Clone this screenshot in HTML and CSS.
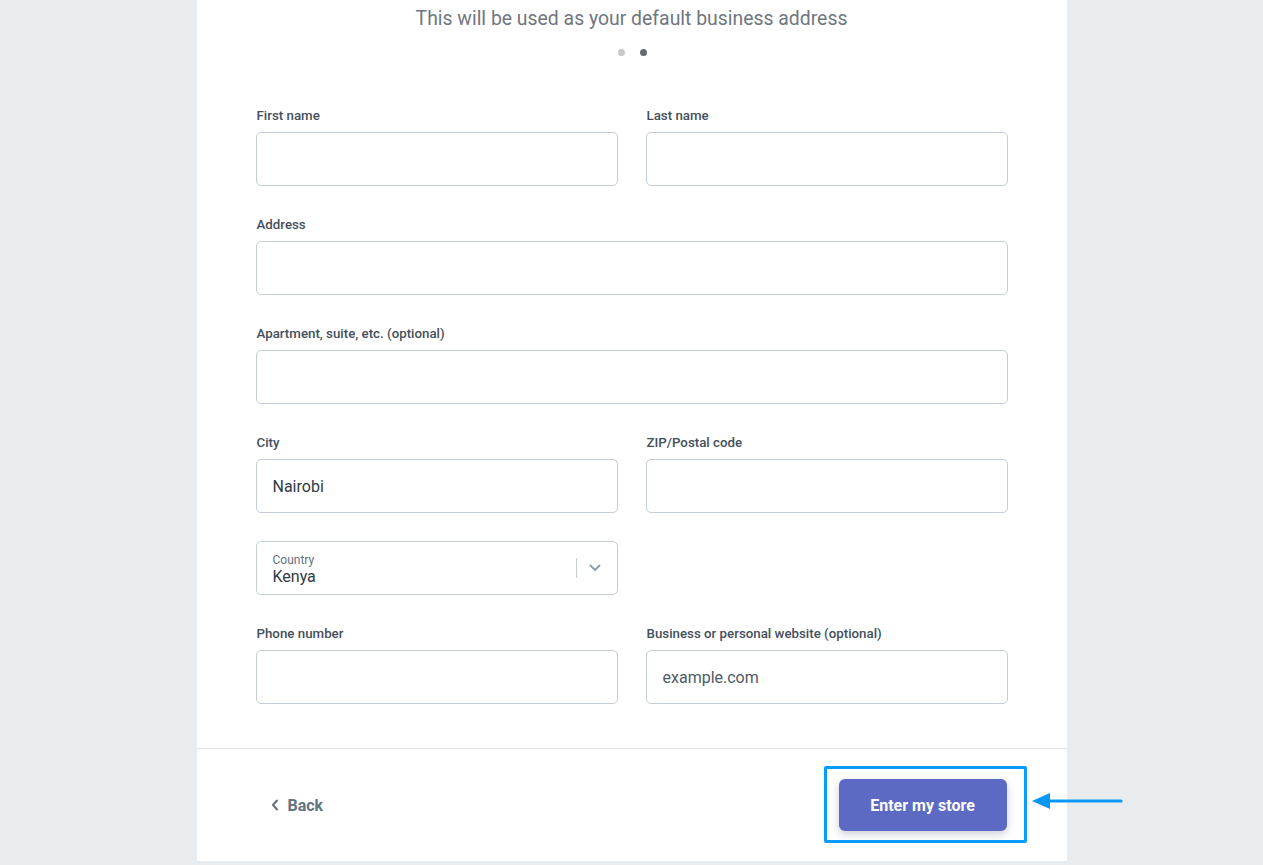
FILE: index.html
```html
<!DOCTYPE html>
<html lang="en">
<head>
<meta charset="utf-8">
<title>Business address</title>
<link rel="stylesheet" href="styles.css">
</head>
<body>
<div class="card">
  <div class="intro">
    <p class="subtitle">This will be used as your default business address</p>
    <div class="dots"><span class="dot"></span><span class="dot active"></span></div>
  </div>
  <form class="form">
    <div class="field">
      <label class="label">First name</label>
      <div class="input"></div>
    </div>
    <div class="field">
      <label class="label">Last name</label>
      <div class="input"></div>
    </div>
    <div class="field full">
      <label class="label">Address</label>
      <div class="input"></div>
    </div>
    <div class="field full">
      <label class="label">Apartment, suite, etc. (optional)</label>
      <div class="input"></div>
    </div>
    <div class="field">
      <label class="label">City</label>
      <div class="input"><span class="value">Nairobi</span></div>
    </div>
    <div class="field">
      <label class="label">ZIP/Postal code</label>
      <div class="input"></div>
    </div>
    <div class="field">
      <div class="input select">
        <div class="select-text">
          <span class="select-label">Country</span>
          <span class="value">Kenya</span>
        </div>
        <span class="sep"></span>
        <svg class="chev" width="12" height="8" viewBox="0 0 12 8"><path d="M1.5 1.5 L6 6 L10.5 1.5" fill="none" stroke="#919eab" stroke-width="2" stroke-linecap="round" stroke-linejoin="round"/></svg>
      </div>
    </div>
    <div class="field empty"></div>
    <div class="field">
      <label class="label">Phone number</label>
      <div class="input"></div>
    </div>
    <div class="field">
      <label class="label">Business or personal website (optional)</label>
      <div class="input"><span class="value placeholder">example.com</span></div>
    </div>
  </form>
  <div class="footer">
    <a class="back"><svg width="8" height="12" viewBox="0 0 8 12"><path d="M6 1.5 L2 6 L6 10.5" fill="none" stroke="#637381" stroke-width="2" stroke-linecap="round" stroke-linejoin="round"/></svg>Back</a>
    <div class="cta">
      <button class="primary" type="button">Enter my store</button>
      <span class="highlight"></span>
      <svg class="arrow" width="92" height="20" viewBox="0 0 92 20"><path d="M14 10 H89" stroke="#0a96f5" stroke-width="3.2" stroke-linecap="round"/><path d="M0 10 L18 2 L18 18 Z" fill="#0a96f5"/></svg>
    </div>
  </div>
</div>
</body>
</html>
```
FILE: styles.css
```css
* { box-sizing: border-box; }
html, body { margin: 0; padding: 0; }
body {
  background: #e8ecef;
  font-family: Roboto, "Liberation Sans", Arial, sans-serif;
  color: #212b36;
  height: 865px;
  overflow: hidden;
}
.card {
  width: 870px;
  margin: 0 auto;
  background: #fff;
  height: 861px;
  display: flex;
  flex-direction: column;
}
.intro {
  padding-top: 6px;
  display: flex;
  flex-direction: column;
  align-items: center;
}
.subtitle {
  margin: 0;
  font-size: 19.4px;
  line-height: 25px;
  color: #6f7680;
  font-weight: 400;
}
.dots {
  margin-top: 18px;
  margin-left: 2px;
  display: flex;
  gap: 15px;
}
.dot {
  width: 7px;
  height: 7px;
  border-radius: 50%;
  background: #c9c9c9;
}
.dot.active { background: #666a70; }
.form {
  margin: 0;
  padding: 49px 59px 44px;
  display: grid;
  grid-template-columns: 362px 362px;
  column-gap: 28px;
  row-gap: 28px;
  border-bottom: 1px solid #dfe3e8;
}
.field { display: flex; flex-direction: column; }
.field.full { grid-column: 1 / span 2; }
.label {
  font-size: 13.3px;
  line-height: 19px;
  font-weight: 500;
  color: #454f5b;
  margin-bottom: 8px;
  padding-left: 1px;
  position: relative;
  top: 1px;
}
.input {
  height: 54px;
  border: 1px solid #c4cdd5;
  border-radius: 5px;
  display: flex;
  align-items: center;
  padding: 0 16px;
}
.value {
  font-size: 16px;
  color: #313a44;
}
.placeholder { color: #505a64; }
.select { padding-right: 16px; }
.select-text {
  flex: 1;
  display: flex;
  flex-direction: column;
  padding-top: 3px;
}
.select-label {
  font-size: 12px;
  line-height: 14px;
  color: #637381;
}
.select .value { line-height: 20px; }
.sep {
  width: 1px;
  height: 20px;
  background: #c4cdd5;
  margin-right: 12px;
}
.chev { display: block; }
.footer {
  flex: 1;
  display: flex;
  align-items: center;
  justify-content: space-between;
  padding: 0 60px 0 59px;
}
.back {
  display: flex;
  align-items: center;
  gap: 9px;
  padding-left: 15px;
  font-size: 16px;
  font-weight: 700;
  color: #637381;
  cursor: pointer;
}
.cta { position: relative; }
.primary {
  width: 168px;
  height: 52px;
  border: 0;
  border-radius: 6px;
  background: #5c6ac4;
  color: #fff;
  font-family: Roboto, "Liberation Sans", Arial, sans-serif;
  font-size: 16px;
  font-weight: 700;
  box-shadow: 0 3px 8px rgba(50, 60, 90, 0.25);
  display: block;
}
.highlight {
  position: absolute;
  top: -13px;
  left: -15px;
  right: -20px;
  bottom: -12px;
  border: 3px solid #0a9bff;
  border-radius: 2px;
  pointer-events: none;
}
.arrow {
  position: absolute;
  left: 193px;
  top: 12px;
}
```
